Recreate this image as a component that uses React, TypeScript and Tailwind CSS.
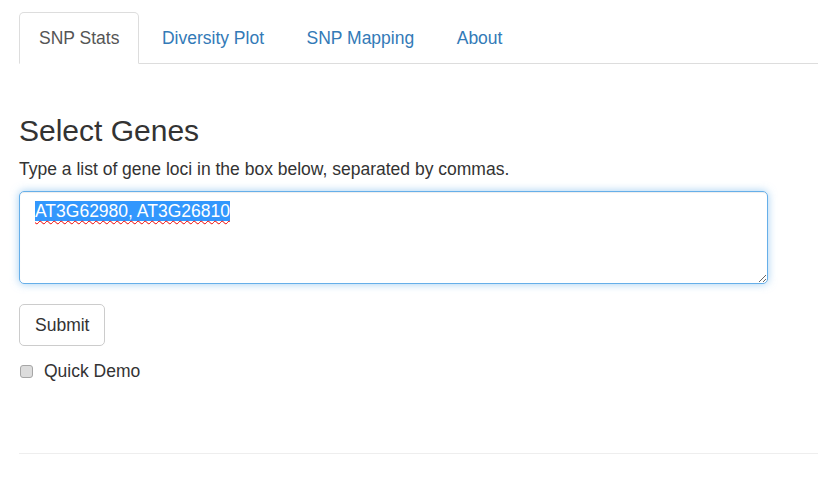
import React, { useState } from "react";

const TABS = ["SNP Stats", "Diversity Plot", "SNP Mapping", "About"];

export default function App() {
  const [active, setActive] = useState(0);
  const [demo, setDemo] = useState(false);

  return (
    <div
      className="min-h-[478px] bg-white pl-[19px] text-[17.5px] leading-[25px] text-[#333]"
      style={{ fontFamily: '"Liberation Sans", Arial, sans-serif' }}
    >
      <div className="pt-[12px]">
        <ul className="flex border-b border-[#ddd]">
          {TABS.map((t, i) => (
            <li key={t} className="-mb-px mr-[2.5px]">
              <button
                onClick={() => setActive(i)}
                className={`block rounded-t-[5px] border px-[19px] py-[12.5px] leading-[25px] ${
                  active === i
                    ? "border-[#ddd] border-b-transparent bg-white text-[#555]"
                    : "border-transparent text-[#337ab7] hover:bg-[#eee]"
                }`}
              >
                {t}
              </button>
            </li>
          ))}
        </ul>
      </div>

      <h3 className="mt-[50px] mb-[10px] text-[30px] leading-[33px] font-normal text-[#333]">
        Select Genes
      </h3>
      <p className="mb-[9px]">Type a list of gene loci in the box below, separated by commas.</p>

      <div className="h-[93px] w-[749px] resize-y overflow-auto rounded-[5px] border border-[#66afe9] px-[15px] py-[7px] shadow-[inset_0_1px_1px_rgba(0,0,0,0.075),0_0_8px_rgba(102,175,233,0.6)]">
        <span className="bg-[#3297fd] text-white underline decoration-wavy decoration-[#e00] decoration-1 underline-offset-[3px]">
          AT3G62980, AT3G26810
        </span>
      </div>

      <button className="mt-[20px] block h-[42px] rounded-[5px] border border-[#ccc] bg-white px-[15px] text-[#333] hover:bg-[#e6e6e6]">
        Submit
      </button>

      <label className="mt-[13px] flex items-center">
        <input
          type="checkbox"
          checked={demo}
          onChange={(e) => setDemo(e.target.checked)}
          className="m-0 ml-[1px] h-[13px] w-[13px] appearance-none rounded-[3px] border border-[#a6a6a6] bg-[#dcdcdc] checked:bg-[#3297fd]"
        />
        <span className="ml-[11px]">Quick Demo</span>
      </label>

      <hr className="mt-[69px] border-0 border-t border-[#eee]" />
    </div>
  );
}
